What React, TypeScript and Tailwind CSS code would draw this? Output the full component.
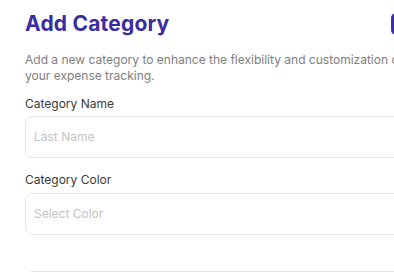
import React from "react";

export default function App() {
  return (
    <div
      className="w-[394px] h-[272px] overflow-hidden bg-white"
      style={{ fontFamily: "Inter, 'Noto Sans', sans-serif" }}
    >
      <div className="w-[520px] pl-[25px] pt-[13px]">
        <div className="flex items-center w-[446px] justify-between h-[22px]">
          <h1 className="text-[21px] leading-[22px] font-bold text-[#3a2da2] tracking-[0.2px]">
            Add Category
          </h1>
          <button className="w-[80px] h-[22px] rounded-[5px] bg-[#3d2fa8]" />
        </div>
        <p className="mt-[17px] text-[12px] leading-[16px] text-[#808080] whitespace-nowrap">
          Add a new category to enhance the flexibility and customization of
          <br />
          your expense tracking.
        </p>
        <label className="block mt-[12px] text-[12px] leading-[16px] text-[#3a3a3a]">
          Category Name
        </label>
        <div className="mt-[4px] h-[42px] w-[470px] rounded-[7px] border border-[#e8e8e8] flex items-center pl-[8px] text-[12px] text-[#c4c4c4]">
          Last Name
        </div>
        <label className="block mt-[14px] text-[12px] leading-[16px] text-[#3a3a3a]">
          Category Color
        </label>
        <div className="mt-[5px] h-[42px] w-[470px] rounded-[7px] border border-[#e8e8e8] flex items-center pl-[8px] text-[12px] text-[#c4c4c4]">
          Select Color
        </div>
        <div className="mt-[36px] h-[30px] w-[470px] rounded-[8px] border border-[#e3e3e3]" />
      </div>
    </div>
  );
}
